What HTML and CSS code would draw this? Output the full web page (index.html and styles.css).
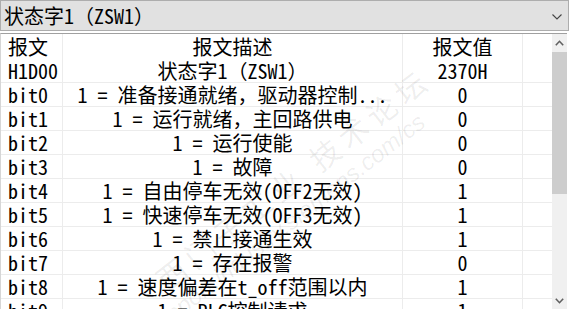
FILE: index.html
```html
<!DOCTYPE html>
<html lang="zh-CN">
<head>
<meta charset="utf-8">
<title>状态字1（ZSW1）</title>
<link rel="stylesheet" href="styles.css">
</head>
<body>
<div class="combo">
  <span class="combo-text">状态字1（ZSW1）</span>
  <svg class="combo-arrow" width="10" height="6" viewBox="0 0 10 6"><path d="M0.5 0.5 L5 5 L9.5 0.5" fill="none" stroke="#444" stroke-width="1.1"/></svg>
</div>
<div class="panel">
  <div class="table">
    <div class="row head">
      <div class="cell c1">报文</div>
      <div class="cell c2">报文描述</div>
      <div class="cell c3">报文值</div>
      <div class="cell c4"></div>
    </div>
    <div class="row">
      <div class="cell c1">H1D00</div>
      <div class="cell c2">状态字1（ZSW1）</div>
      <div class="cell c3">2370H</div>
      <div class="cell c4"></div>
    </div>
    <div class="row">
      <div class="cell c1">bit0</div>
      <div class="cell c2">1 = 准备接通就绪，驱动器控制...</div>
      <div class="cell c3">0</div>
      <div class="cell c4"></div>
    </div>
    <div class="row">
      <div class="cell c1">bit1</div>
      <div class="cell c2">1 = 运行就绪，主回路供电</div>
      <div class="cell c3">0</div>
      <div class="cell c4"></div>
    </div>
    <div class="row">
      <div class="cell c1">bit2</div>
      <div class="cell c2">1 = 运行使能</div>
      <div class="cell c3">0</div>
      <div class="cell c4"></div>
    </div>
    <div class="row">
      <div class="cell c1">bit3</div>
      <div class="cell c2">1 = 故障</div>
      <div class="cell c3">0</div>
      <div class="cell c4"></div>
    </div>
    <div class="row">
      <div class="cell c1">bit4</div>
      <div class="cell c2">1 = 自由停车无效(OFF2无效)</div>
      <div class="cell c3">1</div>
      <div class="cell c4"></div>
    </div>
    <div class="row">
      <div class="cell c1">bit5</div>
      <div class="cell c2">1 = 快速停车无效(OFF3无效)</div>
      <div class="cell c3">1</div>
      <div class="cell c4"></div>
    </div>
    <div class="row">
      <div class="cell c1">bit6</div>
      <div class="cell c2">1 = 禁止接通生效</div>
      <div class="cell c3">1</div>
      <div class="cell c4"></div>
    </div>
    <div class="row">
      <div class="cell c1">bit7</div>
      <div class="cell c2">1 = 存在报警</div>
      <div class="cell c3">0</div>
      <div class="cell c4"></div>
    </div>
    <div class="row">
      <div class="cell c1">bit8</div>
      <div class="cell c2">1 = 速度偏差在t_off范围以内</div>
      <div class="cell c3">1</div>
      <div class="cell c4"></div>
    </div>
    <div class="row">
      <div class="cell c1">bit9</div>
      <div class="cell c2">1 = PLC控制请求</div>
      <div class="cell c3">1</div>
      <div class="cell c4"></div>
    </div>
  </div>
  <div class="scrollbar">
    <div class="sb-btn">
      <svg width="9" height="6" viewBox="0 0 9 6"><path d="M0.8 5.2 L4.5 1.3 L8.2 5.2" fill="none" stroke="#606060" stroke-width="1.6"/></svg>
    </div>
    <div class="sb-thumb"></div>
    <div class="sb-track"></div>
    <div class="sb-btn down">
      <svg width="9" height="6" viewBox="0 0 9 6"><path d="M0.8 0.8 L4.5 4.7 L8.2 0.8" fill="none" stroke="#606060" stroke-width="1.6"/></svg>
    </div>
  </div>
  <div class="watermark">
    <div class="wm-cn">西门子工业 技术论坛</div>
    <div class="wm-en">support.industry.siemens.com/cs</div>
  </div>
</div>
</body>
</html>
```
FILE: styles.css
```css
html, body {
  margin: 0;
  padding: 0;
  background: #ffffff;
}
body {
  width: 569px;
  height: 309px;
  overflow: hidden;
  font-family: "Noto Sans Mono CJK SC", "Noto Sans CJK SC", "Liberation Mono", monospace;
  font-size: 20px;
  color: #000;
}
.combo {
  box-sizing: border-box;
  height: 31px;
  width: 569px;
  background: #e1e1e1;
  border: 1px solid #adadad;
  display: flex;
  align-items: center;
  justify-content: space-between;
  padding: 0 6px 0 3px;
  margin-bottom: 2px;
}
.combo-text {
  line-height: 29px;
}
.combo-arrow {
  margin-top: 2px;
}
.panel {
  position: relative;
  box-sizing: border-box;
  width: 567px;
  height: 276px;
  border-top: 1px solid #a0a0a0;
  border-left: 1px solid #d6d6d6;
  display: flex;
  overflow: hidden;
}
.table {
  width: 551px;
  display: flex;
  flex-direction: column;
}
.row {
  display: grid;
  grid-template-columns: 62px 340px 120px 29px;
  box-sizing: border-box;
  height: 24px;
  border-bottom: 1px solid #ececec;
  flex: none;
}
.row.head {
  height: 25px;
  border-bottom: none;
}
.cell {
  box-sizing: border-box;
  line-height: 23px;
  white-space: nowrap;
}
.c1, .c2, .c3 {
  border-right: 1px solid #ececec;
}
.c1 {
  padding-left: 7px;
}
.c2, .c3 {
  text-align: center;
}
.head .cell {
  line-height: 25px;
}
.scrollbar {
  width: 15px;
  flex: none;
  display: flex;
  flex-direction: column;
  background: #f0f0f0;
}
.sb-btn {
  height: 18px;
  display: flex;
  align-items: center;
  justify-content: center;
  flex: none;
}
.sb-btn.down {
  height: 17px;
}
.sb-thumb {
  height: 142px;
  background: #cdcdcd;
  flex: none;
}
.sb-track {
  flex: 1;
}
.watermark {
  position: absolute;
  left: 118px;
  top: 262px;
  transform: rotate(-38deg);
  transform-origin: left top;
  pointer-events: none;
  font-family: "Liberation Sans", "Noto Sans CJK SC", sans-serif;
  color: rgba(0, 0, 0, 0.07);
  white-space: nowrap;
}
.wm-cn {
  font-size: 30px;
  line-height: 34px;
  margin-left: 40px;
  letter-spacing: 6px;
}
.wm-en {
  font-size: 24px;
  line-height: 26px;
  font-style: italic;
}
```
